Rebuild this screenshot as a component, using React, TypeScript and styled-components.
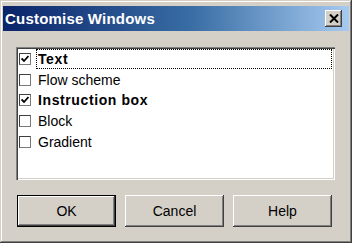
import { useState } from "react";
import styled, { createGlobalStyle } from "styled-components";

const GlobalStyle = createGlobalStyle`
  html, body {
    margin: 0;
    padding: 0;
    background: #ffffff;
  }
  body {
    font-family: "Liberation Sans", Arial, sans-serif;
  }
`;

const Window = styled.div`
  box-sizing: border-box;
  width: 352px;
  height: 243px;
  padding: 6px 3px 3px 3px;
  background: #d4d0c8;
  box-shadow: inset -1px -1px #404040, inset 1px 1px #d4d0c8,
    inset -2px -2px #808080, inset 2px 2px #ffffff;
  display: flex;
  flex-direction: column;
`;

const TitleBar = styled.div`
  height: 25px;
  display: flex;
  align-items: center;
  justify-content: space-between;
  padding: 0 7px 0 2px;
  background: linear-gradient(to right, #0a246a 0%, #3a6ea5 55%, #a6caf0 100%);
`;

const Title = styled.span`
  color: #ffffff;
  font-size: 15px;
  font-weight: bold;
  letter-spacing: 0.2px;
`;

const CloseBtn = styled.div`
  width: 17px;
  height: 17px;
  box-sizing: border-box;
  background: #d4d0c8;
  box-shadow: inset -1px -1px #404040, inset 1px 1px #ffffff,
    inset -2px -2px #808080;
  display: flex;
  align-items: center;
  justify-content: center;
`;

const Body = styled.div`
  flex: 1;
  padding: 16px 14px 0 13px;
  display: flex;
  flex-direction: column;
  gap: 15px;
`;

const ListBox = styled.div`
  height: 133px;
  box-sizing: border-box;
  background: #ffffff;
  padding: 2px;
  box-shadow: inset 1px 1px #808080, inset 2px 2px #404040,
    inset -1px -1px #ffffff, inset -2px -2px #d4d0c8;
  display: flex;
  flex-direction: column;
`;

const Row = styled.div`
  height: 20.6px;
  display: flex;
  align-items: center;
  gap: 5px;
  padding-left: 1px;
  cursor: default;
`;

const Check = styled.div`
  width: 12px;
  height: 12px;
  flex: none;
  box-sizing: border-box;
  background: #ffffff;
  border: 1px solid #7a7a7a;
  border-top-color: #404040;
  border-left-color: #404040;
  display: flex;
  align-items: center;
  justify-content: center;
`;

const Label = styled.div<{ $bold: boolean; $focus: boolean }>`
  flex: 1;
  height: 20px;
  box-sizing: border-box;
  display: flex;
  align-items: center;
  padding-left: 1px;
  margin-right: 1px;
  font-size: 14px;
  color: #000000;
  font-weight: ${(p) => (p.$bold ? "bold" : "normal")};
  letter-spacing: ${(p) => (p.$bold ? "0.6px" : "0")};
  border: 1px dotted ${(p) => (p.$focus ? "#000000" : "transparent")};
`;

const ButtonRow = styled.div`
  display: flex;
  gap: 9px;
  padding-left: 1px;
`;

const Button = styled.button<{ $default?: boolean }>`
  width: 99px;
  height: 32px;
  box-sizing: border-box;
  padding: 0;
  font-family: "Liberation Sans", Arial, sans-serif;
  font-size: 14px;
  color: #000000;
  background: #d4d0c8;
  border: ${(p) => (p.$default ? "1px solid #000000" : "none")};
  box-shadow: inset -1px -1px #404040, inset 1px 1px #ffffff,
    inset -2px -2px #808080, inset 2px 2px #d4d0c8;
  cursor: default;
`;

const items = [
  { name: "Text", checked: true },
  { name: "Flow scheme", checked: false },
  { name: "Instruction box", checked: true },
  { name: "Block", checked: false },
  { name: "Gradient", checked: false },
];

function App() {
  const [list, setList] = useState(items);
  const [focus, setFocus] = useState(0);

  function toggle(i: number) {
    setFocus(i);
    setList(list.map((it, j) => (j === i ? { ...it, checked: !it.checked } : it)));
  }

  return (
    <>
      <GlobalStyle />
      <Window>
        <TitleBar>
          <Title>Customise Windows</Title>
          <CloseBtn>
            <svg width="10" height="9" viewBox="0 0 10 9">
              <path d="M1 0.5 L9 8.5 M9 0.5 L1 8.5" stroke="#000" strokeWidth="2" />
            </svg>
          </CloseBtn>
        </TitleBar>
        <Body>
          <ListBox>
            {list.map((it, i) => (
              <Row key={it.name} onClick={() => toggle(i)}>
                <Check>
                  {it.checked && (
                    <svg width="8" height="8" viewBox="0 0 8 8">
                      <path d="M0.5 3.5 L3 6 L7.5 1" stroke="#000" strokeWidth="1.8" fill="none" />
                    </svg>
                  )}
                </Check>
                <Label $bold={it.checked} $focus={focus === i}>
                  {it.name}
                </Label>
              </Row>
            ))}
          </ListBox>
          <ButtonRow>
            <Button $default>OK</Button>
            <Button>Cancel</Button>
            <Button>Help</Button>
          </ButtonRow>
        </Body>
      </Window>
    </>
  );
}

export default App;
